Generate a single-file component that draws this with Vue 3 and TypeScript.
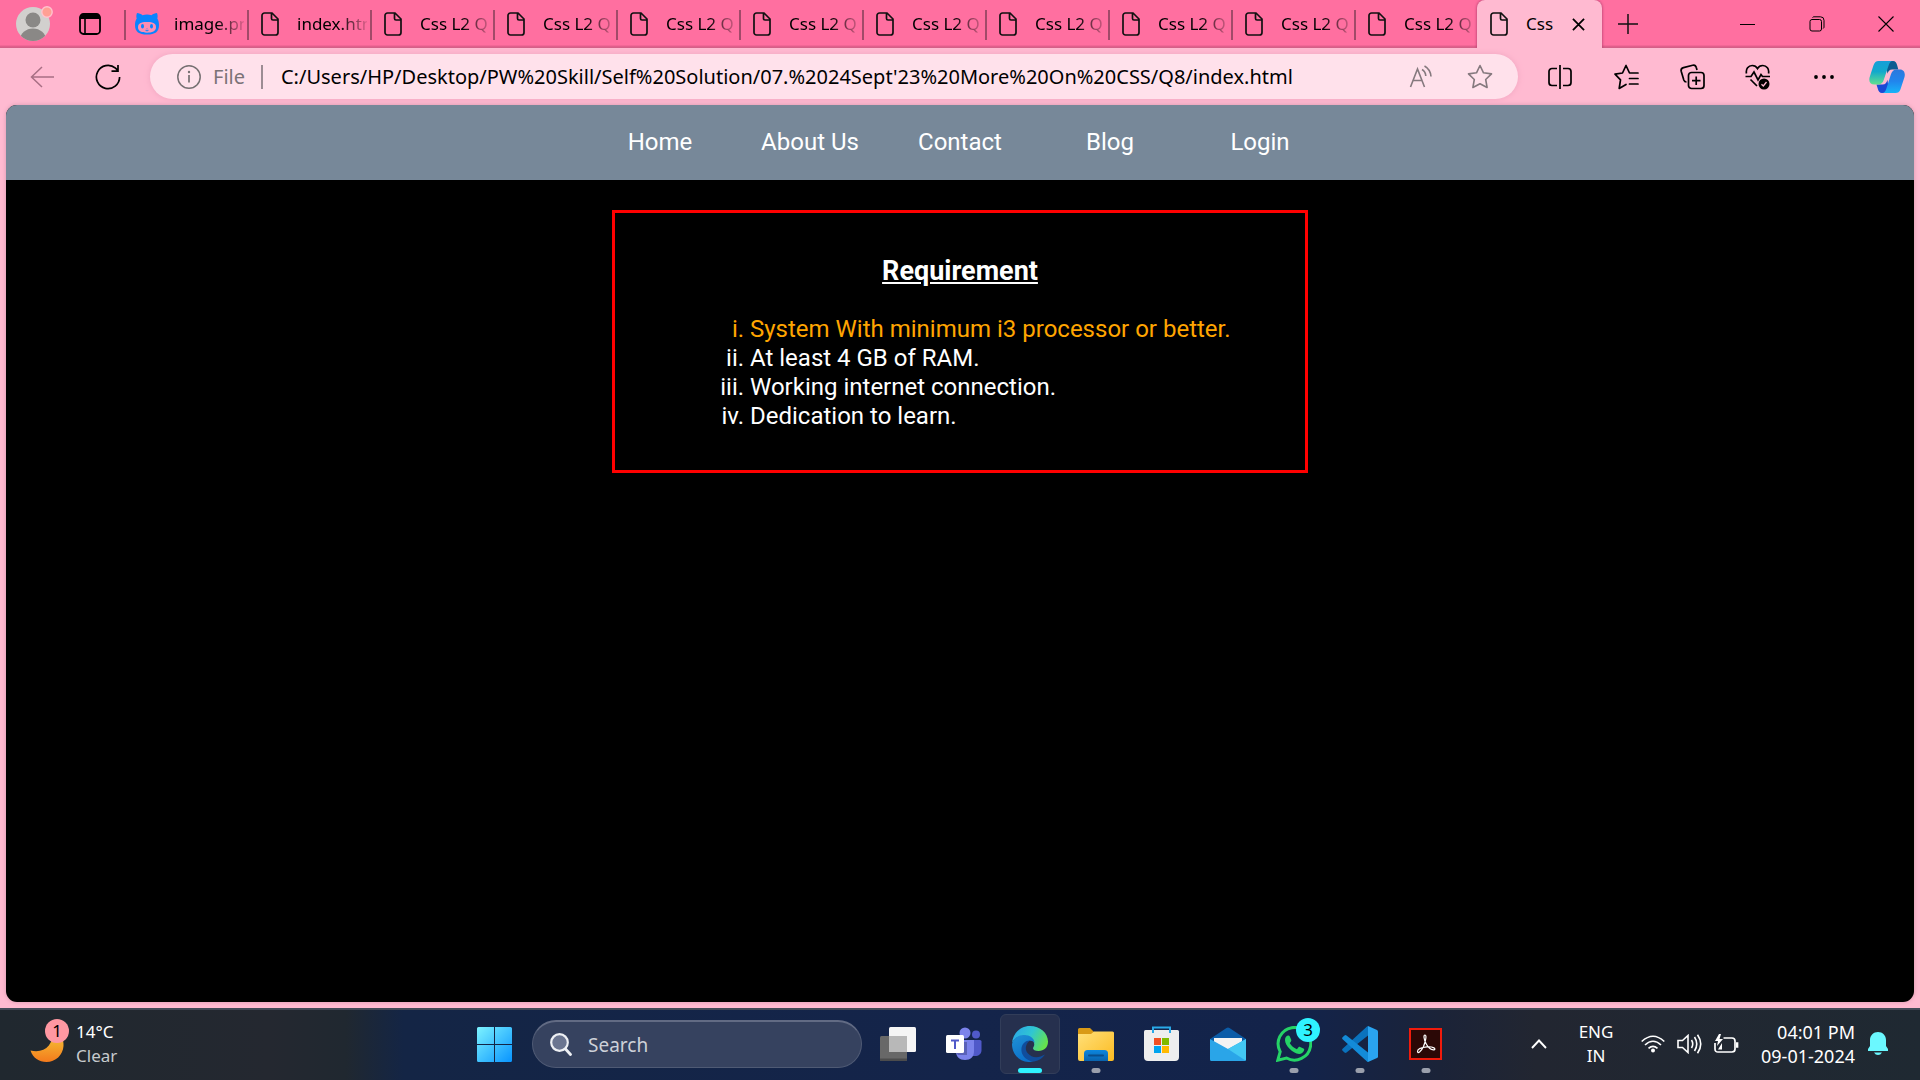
<script setup lang="ts">
import { ref } from 'vue'

interface Tab {
  title: string
  icon: 'cat' | 'file'
}

const tabs: Tab[] = [
  { title: 'image.png', icon: 'cat' },
  { title: 'index.html', icon: 'file' },
  ...Array.from({ length: 9 }, (): Tab => ({ title: 'Css L2 Q', icon: 'file' })),
]

const address = ref("C:/Users/HP/Desktop/PW%20Skill/Self%20Solution/07.%2024Sept'23%20More%20On%20CSS/Q8/index.html")
const search = ref('')

const links: string[] = ['Home', 'About Us', 'Contact', 'Blog', 'Login']
const requirements: string[] = [
  'System With minimum i3 processor or better.',
  'At least 4 GB of RAM.',
  'Working internet connection.',
  'Dedication to learn.',
]
</script>

<template>
  <div class="screen">
    <header class="tabstrip">
      <button class="profile" aria-label="Profile">
        <svg width="40" height="36" viewBox="0 0 40 36">
          <defs><clipPath id="avatar"><circle cx="17" cy="18" r="17" /></clipPath></defs>
          <circle cx="17" cy="18" r="17" fill="#d2d0ce" />
          <g clip-path="url(#avatar)" fill="#8a8886">
            <circle cx="17" cy="14" r="7.5" />
            <ellipse cx="17" cy="34" rx="13" ry="11.5" />
          </g>
          <circle cx="31" cy="6" r="5.2" fill="#ff9f94" stroke="#ffc3cf" stroke-width="1.4" />
        </svg>
      </button>
      <button class="workspaces" aria-label="Tab actions">
        <svg width="22" height="22" viewBox="0 0 22 22">
          <rect x="1" y="1" width="20" height="20" rx="3.5" fill="none" stroke="#000" stroke-width="1.8" />
          <path d="M1 6V4a3 3 0 0 1 3-3h14a3 3 0 0 1 3 3v2z" fill="#000" />
          <path d="M6 6v15" stroke="#000" stroke-width="1.6" />
        </svg>
      </button>
      <div class="tabs">
        <button v-for="(tab, i) in tabs" :key="i" class="tab">
          <span class="tab-icon">
            <svg v-if="tab.icon === 'cat'" width="24" height="22" viewBox="0 0 24 22">
              <path d="M2 0c2 0 4 1 5.5 2.200a17 17 0 0 1 9 0C18 1 20 0 22 0c.8 2 .8 4 .3 5.500C23.500 7.500 24 9.500 24 12c0 7-4 9.500-12 9.500S0 19 0 12c0-2.500.5-4.500 1.700-6.500C1.200 4 1.200 2 2 0z" fill="#0a84ff" />
              <path d="M7 9.500c2-.6 8-.6 10 0 3 .6 4 2.300 4 4.800 0 4.200-4 5.400-9 5.400s-9-1.200-9-5.400c0-2.500 1-4.200 4-4.800z" fill="#ff8db2" />
              <ellipse cx="7.500" cy="13.200" rx="1.500" ry="2.300" fill="#0a84ff" />
              <ellipse cx="16.500" cy="13.200" rx="1.500" ry="2.300" fill="#0a84ff" />
              <path d="M10.500 17.300q1.500 1.200 3 0M12 15.500v.8" stroke="#0a84ff" fill="none" />
            </svg>
            <svg v-else width="18" height="24" viewBox="0 0 18 24">
              <path d="M3.500 1H11l6 6v13.500a2.500 2.500 0 0 1-2.500 2.500h-11A2.500 2.500 0 0 1 1 20.500v-17A2.500 2.500 0 0 1 3.500 1zM10.500 1v5.500a1.500 1.500 0 0 0 1.500 1.500h5" fill="none" stroke="#111" stroke-width="1.700" />
            </svg>
          </span>
          <span class="tab-title">{{ tab.title }}</span>
        </button>
        <div class="tab active">
          <span class="tab-icon">
            <svg width="18" height="24" viewBox="0 0 18 24">
              <path d="M3.500 1H11l6 6v13.500a2.500 2.500 0 0 1-2.500 2.500h-11A2.500 2.500 0 0 1 1 20.500v-17A2.500 2.500 0 0 1 3.500 1zM10.500 1v5.500a1.500 1.500 0 0 0 1.500 1.500h5" fill="none" stroke="#111" stroke-width="1.700" />
            </svg>
          </span>
          <span class="tab-title">Css</span>
          <button class="tab-close" aria-label="Close tab">
            <svg width="13" height="13" viewBox="0 0 14 14"><path d="M1 1l12 12M13 1L1 13" stroke="#000" stroke-width="1.900" /></svg>
          </button>
        </div>
      </div>
      <button class="new-tab" aria-label="New tab">
        <svg width="22" height="22" viewBox="0 0 22 22"><path d="M11 1v20M1 11h20" stroke="#111" stroke-width="1.500" /></svg>
      </button>
      <div class="window-buttons">
        <button aria-label="Minimise">
          <svg width="16" height="16" viewBox="0 0 16 16"><path d="M0 8.500h15" stroke="#000" /></svg>
        </button>
        <button aria-label="Restore">
          <svg width="16" height="16" viewBox="0 0 16 16">
            <rect x="1" y="3.500" width="11.500" height="11.500" rx="2" fill="none" stroke="#000" />
            <path d="M3.500 1.500Q4 .8 5 .8h6.500q3.500 0 3.500 3.500V11q0 1-.8 1.500" fill="none" stroke="#000" />
          </svg>
        </button>
        <button aria-label="Close">
          <svg width="16" height="16" viewBox="0 0 16 16"><path d="M.5.5l15 15M15.500.5l-15 15" stroke="#000" stroke-width="1.100" /></svg>
        </button>
      </div>
    </header>

    <div class="toolbar">
      <button class="tool" aria-label="Back">
        <svg width="24" height="22" viewBox="0 0 24 22"><path d="M12 1L1.500 11 12 21M1.500 11H24" fill="none" stroke="#a86f84" stroke-width="1.500" /></svg>
      </button>
      <button class="tool" aria-label="Refresh">
        <svg width="26" height="26" viewBox="0 0 26 26"><path d="M24.600 13A11.600 11.600 0 1 1 20.500 4.200L23 6.700M23 1v6.200h-6.500" fill="none" stroke="#000" stroke-width="1.700" /></svg>
      </button>
      <div class="address">
        <svg width="24" height="24" viewBox="0 0 24 24">
          <circle cx="12" cy="12" r="11.200" fill="none" stroke="#767072" stroke-width="1.500" />
          <path d="M12 10v7.500" stroke="#767072" stroke-width="1.700" /><circle cx="12" cy="7" r="1.200" fill="#767072" />
        </svg>
        <label class="scheme" for="url">File</label>
        <input id="url" v-model="address" class="url" type="text" spellcheck="false" />
        <button class="inline" aria-label="Read aloud">
          <svg width="24" height="24" viewBox="0 0 24 24" fill="none" stroke="#85797e" stroke-width="1.600">
            <path d="M1.500 22L8.500 4l7 18M4 15.500h9M13 4.500q3.500 2 3.800 6.500M15.500 1q6 3.500 6.500 10.500" />
          </svg>
        </button>
        <button class="inline" aria-label="Add to favourites">
          <svg width="26" height="25" viewBox="0 0 26 25" fill="none" stroke="#85797e" stroke-width="1.600" stroke-linejoin="round">
            <path d="M13 1.500l3.500 7.300 8 1.100-5.800 5.600 1.400 8-7.100-3.800-7.100 3.800 1.400-8L1.500 9.900l8-1.100z" />
          </svg>
        </button>
      </div>
      <button class="tool" aria-label="Split screen">
        <svg width="24" height="24" viewBox="0 0 24 24" fill="none" stroke="#000" stroke-width="1.700">
          <path d="M9 3.500H4a3 3 0 0 0-3 3v11a3 3 0 0 0 3 3h5M15 3.500h5a3 3 0 0 1 3 3v11a3 3 0 0 1-3 3h-5M12 0v24" />
        </svg>
      </button>
      <button class="tool" aria-label="Favourites">
        <svg width="25" height="26" viewBox="0 0 25 26" fill="none" stroke="#000" stroke-width="1.700" stroke-linejoin="round" stroke-linecap="round">
          <path d="M24 9h-8.500L12 1.500 8.500 9 1 10.200l5.500 5.600-1.300 8.700 6.800-4M15.500 14.500H24M15.500 20H24" />
        </svg>
      </button>
      <button class="tool" aria-label="Collections">
        <svg width="25" height="26" viewBox="0 0 25 26" fill="none" stroke="#000" stroke-width="1.700">
          <rect x="8.500" y="8.500" width="15.500" height="16" rx="3" />
          <path d="M16.200 12.500v8.500M12 16.700h8.500M17 6l-.8-2.700Q15.500.5 12.700 1.200L3.500 3.600Q.5 4.500 1.200 7.300l2.600 8.700q.7 2 2.700 2" />
        </svg>
      </button>
      <button class="tool" aria-label="Browser essentials">
        <svg width="26" height="26" viewBox="0 0 26 26">
          <path d="M1.500 9.500C.5 5 3.500 1.500 7.200 1.500c2.600 0 4.300 1.200 5.300 3 1-1.800 2.700-3 5.300-3 3.700 0 6.700 3.500 5.700 8M.5 12.500h5.500l3-4.500 4 8 3-5.500 1.500 2h7.500M5.500 15.500l6.500 6.500" fill="none" stroke="#000" stroke-width="1.700" />
          <circle cx="19" cy="20" r="5.500" fill="#000" /><path d="M16.500 20.300l1.800 1.700 3.200-4" stroke="#ffbad1" stroke-width="1.300" fill="none" />
        </svg>
      </button>
      <button class="tool" aria-label="Settings and more">
        <svg width="20" height="4" viewBox="0 0 20 4"><circle cx="2" cy="2" r="1.900" /><circle cx="10" cy="2" r="1.900" /><circle cx="18" cy="2" r="1.900" /></svg>
      </button>
      <button class="tool copilot" aria-label="Copilot">
        <svg width="36" height="34" viewBox="0 0 36 36" preserveAspectRatio="none">
          <defs>
            <linearGradient id="cpA" x1="0" y1="0" x2="0" y2="1"><stop offset="0" stop-color="#169ed8" /><stop offset=".45" stop-color="#12a9cc" /><stop offset="1" stop-color="#62e08d" /></linearGradient>
            <linearGradient id="cpB" x1="0" y1="0" x2="0" y2="1"><stop offset="0" stop-color="#2b78dc" /><stop offset=".5" stop-color="#2185ed" /><stop offset="1" stop-color="#17b4f8" /></linearGradient>
          </defs>
          <path d="M16 1h8c2.500 0 3.500 2 4.300 5l1 4h-6c-3 0-4 2-4.800 4.500z" fill="#0c5c91" />
          <path d="M20 35h-7c-2.500 0-3.500-2-4.200-4.500L7.500 26h6c3 0 4-2 5-5z" fill="#1a49d6" />
          <path d="M9.500 1H24c-2.500 0-3.500 2-4.500 5l-4.700 15c-1 3.500-2.800 5-5.500 5H5.500C1 26-.5 22.500.7 18L4.500 5.500C5.500 2.500 7 1 9.500 1z" fill="url(#cpA)" />
          <path d="M26.500 35H13c2.500 0 3.500-2 4.500-5l4.200-14c1-4 2.800-6 5.800-6H31c4 0 5.500 4 4.500 8l-4 13c-1 3-2.500 4-5 4z" fill="url(#cpB)" />
        </svg>
      </button>
    </div>

    <div class="viewport">
      <main class="page">
        <nav class="nav">
          <a v-for="link in links" :key="link" href="#">{{ link }}</a>
        </nav>
        <section class="card">
          <h1>Requirement</h1>
          <ol>
            <li v-for="item in requirements" :key="item">{{ item }}</li>
          </ol>
        </section>
      </main>
    </div>

    <footer class="taskbar">
      <button class="weather">
        <span class="moon">
          <svg width="34" height="40" viewBox="0 0 34 40">
            <defs><linearGradient id="moonFill" x1="0" y1="0" x2="0" y2="1"><stop offset="0" stop-color="#f5d03c" /><stop offset="1" stop-color="#f47a1c" /></linearGradient></defs>
            <path d="M23 6c8 3 11 9 10.500 16C33 31 25.500 38 16.500 38 9 38 3 34 .5 26.500 14 30 24 21 23 6z" fill="url(#moonFill)" />
          </svg>
          <span class="badge pink">1</span>
        </span>
        <span class="weather-text"><span>14°C</span><span class="dim">Clear</span></span>
      </button>

      <div class="apps">
        <button class="app" aria-label="Start">
          <svg width="35" height="35" viewBox="0 0 35 35">
            <defs><linearGradient id="winFill" gradientUnits="userSpaceOnUse" x1="0" y1="0" x2="35" y2="35"><stop offset="0" stop-color="#7df3ff" /><stop offset="1" stop-color="#0894ff" /></linearGradient></defs>
            <path d="M1.500 0H17v17H0V1.500Q0 0 1.500 0zM18 0h15.500Q35 0 35 1.500V17H18zM0 18h17v17H1.500Q0 35 0 33.500zM18 18h17v15.500q0 1.500-1.500 1.500H18z" fill="url(#winFill)" />
          </svg>
        </button>
        <label class="search">
          <svg width="22" height="23" viewBox="0 0 22 23">
            <circle cx="9.500" cy="9.500" r="8.300" fill="#6b7590" stroke="#eef0f4" stroke-width="2.200" /><path d="M15.500 16l5 5.500" stroke="#eef0f4" stroke-width="2.800" stroke-linecap="round" />
          </svg>
          <input v-model="search" type="text" placeholder="Search" aria-label="Search" />
        </label>
        <button class="app" aria-label="Task view">
          <svg width="36" height="34" viewBox="0 0 36 34">
            <rect x="9" y="0" width="27" height="25" rx="1.500" fill="#f5f5f5" /><rect x="0" y="9" width="27" height="25" rx="1.500" fill="#686868" /><path d="M9 9h18v16H9z" fill="#b8b8b8" /><path d="M0 31.500h27v1a1.500 1.500 0 0 1-1.500 1.500h-24A1.500 1.500 0 0 1 0 32.500z" fill="#4c4c4c" />
          </svg>
        </button>
        <button class="app" aria-label="Teams">
          <svg width="36" height="34" viewBox="0 0 36 34">
            <circle cx="19" cy="6" r="5.500" fill="#7b83eb" /><circle cx="30" cy="7.500" r="4" fill="#5059c9" />
            <path d="M24 13h10q1.500 0 1.500 1.500V23c0 4-3 6-6.500 6h-5z" fill="#5059c9" /><path d="M10 13h18v11c0 6-3.500 9-9 9s-9-3-9-9z" fill="#7b83eb" />
            <path d="M10 15h11v13h-9l-1.500-2z" fill="#5a61b8" /><rect x="0" y="8" width="18" height="18" rx="1.500" fill="#fff" />
            <path d="M5 12.500h8v2h-3v7.500H8v-7.500H5z" fill="#5059c9" />
          </svg>
        </button>
        <button class="app focused" aria-label="Edge">
          <svg width="36" height="36" viewBox="0 0 36 36">
            <defs>
              <linearGradient id="edgeTop" x1="0" y1=".2" x2="1" y2=".6"><stop offset="0" stop-color="#2aa6e8" /><stop offset=".5" stop-color="#30c6d2" /><stop offset="1" stop-color="#66e34a" /></linearGradient>
              <linearGradient id="edgeLeft" x1="0" y1="0" x2=".5" y2="1"><stop offset="0" stop-color="#2092d6" /><stop offset="1" stop-color="#0b6fc9" /></linearGradient>
            </defs>
            <path d="M0 17C1 7 8.500 0 18 0c10 0 18 7 18 15.500 0 6-4 9.500-9.500 9.500-4.500 0-6.500-2-5-4 1-1.500 1-3.500 0-5.500C17 7 4 8.500 0 17z" fill="url(#edgeTop)" />
            <path d="M0 18C1.500 11.500 7 9 12 9c6 0 10.500 3.500 10.500 8-2.500-4-8-2.500-9.500 2-2 6 3 13.500 10 15.500C20 36 18 36 16.500 36 7 35.500 0 28 0 18z" fill="url(#edgeLeft)" />
            <path d="M18.500 14.500c-4 1.500-6.500 8-3 12.500 4.500 5.500 11.500 5 17.500 1.500-3 4.500-8 7-12.500 7C13 34 8.500 28 9.500 22c.7-4.500 4.500-8 9-7.500z" fill="#104d9c" />
          </svg>
          <span class="indicator"></span>
        </button>
        <button class="app open" aria-label="File Explorer">
          <svg width="36" height="34" viewBox="0 0 36 34">
            <defs><linearGradient id="folderFill" x1="0" y1="0" x2="1" y2="1"><stop offset="0" stop-color="#ffe07a" /><stop offset="1" stop-color="#fcbb21" /></linearGradient><linearGradient id="folderDock" x1="0" y1="0" x2="0" y2="1"><stop offset="0" stop-color="#0c87df" /><stop offset="1" stop-color="#0963ad" /></linearGradient></defs>
            <path d="M1.500 1H12l4 4h18q2 0 2 2v7H0V2.500Q0 1 1.500 1z" fill="#d99a16" /><path d="M0 7h13l3-2.500h18.500Q36 4.500 36 6v26q0 2-2 2H2q-2 0-2-2z" fill="url(#folderFill)" />
            <path d="M6 34v-7.500q0-3.500 3.500-3.500h17q3.500 0 3.500 3.500V34z" fill="url(#folderDock)" /><path d="M11 28.500h14" stroke="#094e8c" stroke-width="2" stroke-linecap="round" />
          </svg>
          <span class="indicator"></span>
        </button>
        <button class="app" aria-label="Microsoft Store">
          <svg width="36" height="36" viewBox="0 0 36 36">
            <path d="M0 5.500q0-1.500 1.500-1.500h32q1.500 0 1.500 1.500V31q0 4-4 4H4q-4 0-4-4z" fill="#eeeeee" /><path d="M9 7V1.500h17V7" fill="none" stroke="#29a9e8" stroke-width="2" />
            <path d="M10 12h7v7h-7z" fill="#f25022" /><path d="M18 12h7v7h-7z" fill="#7fba00" /><path d="M10 20h7v7h-7z" fill="#00a4ef" /><path d="M18 20h7v7h-7z" fill="#ffb900" />
          </svg>
        </button>
        <button class="app" aria-label="Mail">
          <svg width="36" height="34" viewBox="0 0 36 34">
            <path d="M0 12L16.500 1q1.500-1 3 0L36 12 18 25z" fill="#0b5ca8" /><path d="M4 11h28v7L18 25 4 18z" fill="#f3f3f3" /><path d="M0 12l18 10 18-10v20.500q0 1.500-1.500 1.500h-33Q0 34 0 32.500z" fill="#2aa5e8" /><path d="M36 12L18 22l17.500 11.500q.5-.5.5-1z" fill="#43c8f3" />
          </svg>
        </button>
        <button class="app open" aria-label="WhatsApp">
          <svg width="36" height="36" viewBox="0 0 36 36">
            <path d="M1.800 34.200l2.400-8.500A16.300 16.300 0 1 1 10.500 32z" fill="none" stroke="#25d366" stroke-width="3" />
            <path d="M12 9.500c.8-.2 1.500.2 1.800 1l1.400 3.300c.3.700 0 1.500-.5 2.100l-1 1.200c1.700 3 4 4.900 7.200 6.200l1.600-2c.4-.5 1-.6 1.600-.3l3.300 1.600c.7.300 1 .8.7 1.600-.7 2.400-2.800 3.700-5 3.700C16.500 27.400 9 19.500 9 14c0-2.400 1.200-4.200 3-4.500z" fill="#25d366" />
          </svg>
          <span class="badge cyan">3</span>
          <span class="indicator"></span>
        </button>
        <button class="app open" aria-label="Visual Studio Code">
          <svg width="36" height="36" viewBox="0 0 36 36">
            <path d="M26 9.500L4.500 26.500q-1 .8-2 0L.6 24.800q-1-1 0-2L25 .5q.5-.5 1-.5z" fill="#0a72bd" /><path d="M26 26.500L4.500 9.500q-1-.8-2 0L.6 11.200q-1 1 0 2L25 35.500q.5.500 1 .5z" fill="#138bd8" /><path d="M26 0l9 4q1 .5 1 1.500v25q0 1-1 1.500l-9 4z" fill="#2aa4f0" />
          </svg>
          <span class="indicator"></span>
        </button>
        <button class="app open" aria-label="Adobe Acrobat">
          <svg width="34" height="32" viewBox="0 0 34 32">
            <rect x="1" y="1" width="31" height="30" fill="#2b0806" stroke="#f01b0c" stroke-width="2" />
            <path d="M16 7c-1.800 0-1 4.500 1 8.500 2 3.800 5.500 6.500 8 6.300 2.500-.6-.5-3.500-7-3-5.500.5-9.500 2.500-9.500 4.700 0 2.500 3.500.5 6-5C16.500 13.500 18 7 16 7z" fill="none" stroke="#fff" stroke-width="1.200" />
          </svg>
          <span class="indicator"></span>
        </button>
      </div>

      <div class="tray">
        <button class="chevron" aria-label="Show hidden icons">
          <svg width="16" height="10" viewBox="0 0 16 10"><path d="M1 9l7-7.500L15 9" fill="none" stroke="#fff" stroke-width="1.900" /></svg>
        </button>
        <button class="lang"><span>ENG</span><span>IN</span></button>
        <button class="status" aria-label="Network, sound and battery">
          <svg width="24" height="18" viewBox="0 0 24 18" fill="none" stroke="#fff" stroke-width="1.600">
            <path d="M.7 6.500q11.300-10.500 22.600 0M4 10q8-7.500 16 0M7.500 13.300q4.500-4 9 0" /><circle cx="12" cy="15.500" r="2" fill="#fff" stroke="none" />
          </svg>
          <svg width="25" height="20" viewBox="0 0 25 20" fill="none" stroke="#fff" stroke-width="1.600">
            <path d="M1 6.500h4.500L11 1.500v17l-5.500-5H1zM14.500 6q2.500 4 0 8M17.500 3q4.500 7 0 14M20.500 .7q6.500 9.300 0 18.600" />
          </svg>
          <svg width="25" height="20" viewBox="0 0 25 20" fill="none" stroke="#fff" stroke-width="1.700">
            <path d="M9.500 4H18q3 0 3 3v8q0 3-3 3H4q-3 0-3-3V9" /><path d="M22 9h1.500v4H22" fill="#fff" /><path d="M5 0L1 7h3L3 12l6-7H5.500L7 0zM4 15.500L8 9v6.500z" fill="#fff" stroke="none" />
          </svg>
        </button>
        <button class="clock"><span>04:01 PM</span><span>09-01-2024</span></button>
        <button class="bell" aria-label="Notifications">
          <svg width="20" height="24" viewBox="0 0 20 24"><path d="M10 0c4.500 0 8 3.500 8 8v6l2 3v2H0v-2l2-3V8c0-4.500 3.500-8 8-8zM6 20.500h8q-1.500 2.500-4 2.500t-4-2.500z" fill="#6bf8ff" /></svg>
        </button>
      </div>
    </footer>
  </div>
</template>

<style>
body {
  margin: 0;
}
</style>

<style scoped>
.screen {
  display: flex;
  flex-direction: column;
  min-height: 100vh;
  overflow: hidden;
  background: #ffbad1;
  color: #000;
  font: 17px/24px "Noto Sans", sans-serif;
}
button,
input {
  margin: 0;
  padding: 0;
  border: 0;
  background: none;
  color: inherit;
  font: inherit;
}
svg {
  display: block;
  flex: none;
}

.tabstrip {
  display: flex;
  align-items: center;
  height: 48px;
  background: linear-gradient(#ff6fa0 0 45px, #e5608e 46px, #cf5e86 48px);
}
.profile {
  width: 40px;
  margin-left: 16px;
}
.workspaces {
  margin: 0 24px 0 23px;
}
.tabs {
  display: flex;
  align-self: stretch;
  min-width: 0;
}
.tab {
  display: flex;
  align-items: center;
  position: relative;
  width: 123px;
  padding-left: 10px;
  box-sizing: border-box;
  text-align: left;
}
.tab::before {
  content: "";
  position: absolute;
  left: -1px;
  top: 10px;
  width: 2px;
  height: 30px;
  background: #a14a69;
}
.tab-icon {
  display: flex;
  justify-content: center;
  width: 24px;
  flex: none;
}
.tab-title {
  width: 70px;
  margin-left: 15px;
  overflow: hidden;
  white-space: nowrap;
  mask-image: linear-gradient(to right, #000 42px, transparent 74px);
}
.tab.active {
  width: 125px;
  margin-left: -1px;
  border-radius: 8px 8px 0 0;
  background: #ffbad1;
  box-shadow: 0 0 3px #a03060;
  clip-path: inset(0 -4px 0 -4px);
}
.tab.active::before {
  display: none;
}
.tab.active .tab-title {
  width: 42px;
  mask-image: none;
}
.tab-close {
  display: flex;
  margin-left: 4px;
}
.new-tab {
  margin-left: 15px;
}
.window-buttons {
  display: flex;
  align-self: stretch;
  margin-left: auto;
}
.window-buttons button {
  display: flex;
  align-items: center;
  justify-content: center;
  width: 69px;
}

.toolbar {
  display: flex;
  align-items: center;
  height: 57px;
  padding: 0 3px 0 9px;
}
.tool {
  display: flex;
  align-items: center;
  justify-content: center;
  width: 66px;
  height: 48px;
  flex: none;
}
.tool.copilot {
  width: 60px;
}
.address {
  display: flex;
  align-items: center;
  flex: 1;
  min-width: 0;
  height: 45px;
  margin: 0 9px;
  padding: 0 14px 0 27px;
  box-sizing: border-box;
  border-radius: 23px;
  background: #ffe1eb;
  box-shadow: 0 0 6px #f0a6c0;
  font-size: 20px;
}
.scheme {
  margin: 0 16px 0 12px;
  color: #7b7377;
}
.url {
  flex: 1;
  min-width: 0;
  height: 24px;
  padding-left: 18px;
  border-left: 2px solid #9c8c93;
  outline: 0;
}
.inline {
  display: flex;
  justify-content: center;
  width: 48px;
  margin-left: 11px;
}

.viewport {
  display: flex;
  flex: 1;
  padding: 0 6px 6px;
}
.page {
  flex: 1;
  border-radius: 11px;
  overflow: hidden;
  background: #000;
  color: #fff;
  font: 24px/29px Roboto, sans-serif;
  box-shadow: 0 0 4px #d898ae;
}
.nav {
  display: flex;
  justify-content: center;
  align-items: center;
  height: 75px;
  background: #778899;
}
.nav a {
  width: 150px;
  color: #fff;
  text-align: center;
  text-decoration: none;
}
.card {
  max-width: 690px;
  margin: 30px auto 0;
  padding: 42px 0 39px;
  box-sizing: content-box;
  border: 3px solid #f00;
}
.card h1 {
  margin: 0 0 27px;
  font-size: 27px;
  line-height: 33px;
  text-align: center;
  text-decoration: underline;
}
.card ol {
  margin: 0;
  padding-left: 135px;
  list-style: lower-roman;
}
.card li:first-child {
  color: orange;
}

.taskbar {
  display: grid;
  grid-template-columns: 1fr auto 1fr;
  align-items: center;
  height: 72px;
  box-sizing: border-box;
  padding-bottom: 2px;
  border-top: 2px solid #434a58;
  background: linear-gradient(to right, #20282f 0, #242830 14%, #202830 18%, #142545 21%, #14244a 50%, #13234a 68%, #1b2338 75%, #222631 80%, #1f2932 100%);
  color: #fff;
}
.weather {
  display: flex;
  align-items: center;
  justify-self: start;
  margin-left: 30px;
  text-align: left;
}
.moon {
  position: relative;
  margin-right: 12px;
}
.weather-text,
.lang,
.clock {
  display: flex;
  flex-direction: column;
}
.dim {
  color: #c7cacc;
}
.badge {
  position: absolute;
  width: 24px;
  height: 24px;
  border-radius: 50%;
  color: #000;
  text-align: center;
}
.badge.pink {
  left: 15px;
  top: -5px;
  background: #ff98a2;
}
.badge.cyan {
  right: 4px;
  top: 4px;
  background: #2ff3ff;
}
.apps {
  display: flex;
  align-items: center;
  gap: 6px;
}
.app {
  display: flex;
  align-items: center;
  justify-content: center;
  position: relative;
  width: 60px;
  height: 60px;
  box-sizing: border-box;
  border-radius: 6px;
}
.app.focused {
  border: 1px solid #323d59;
  background: #26304e;
}
.indicator {
  position: absolute;
  left: 50%;
  bottom: 1px;
  width: 9px;
  height: 5px;
  border-radius: 3px;
  background: #9a9fac;
  transform: translateX(-50%);
}
.focused .indicator {
  bottom: 0;
  width: 24px;
  background: #2ff3ff;
}
.search {
  display: flex;
  align-items: center;
  width: 330px;
  height: 48px;
  margin-left: 2px;
  padding: 0 17px;
  box-sizing: border-box;
  border: 1px solid #4f5a74;
  border-top: 2px solid #626b84;
  border-radius: 24px;
  background: #36425f;
}
.search input {
  flex: 1;
  min-width: 0;
  margin-left: 16px;
  outline: 0;
  font-size: 19px;
}
.search input::placeholder {
  color: #cdd1d9;
  opacity: 1;
}
.tray {
  display: flex;
  align-items: center;
  justify-self: end;
  padding-right: 32px;
}
.lang {
  width: 50px;
  margin: 0 20px 0 24px;
  text-align: center;
}
.status {
  display: flex;
  align-items: center;
  gap: 12px;
}
.clock {
  width: 104px;
  margin: 0 13px 0 12px;
  font-size: 18px;
  text-align: right;
}
</style>
